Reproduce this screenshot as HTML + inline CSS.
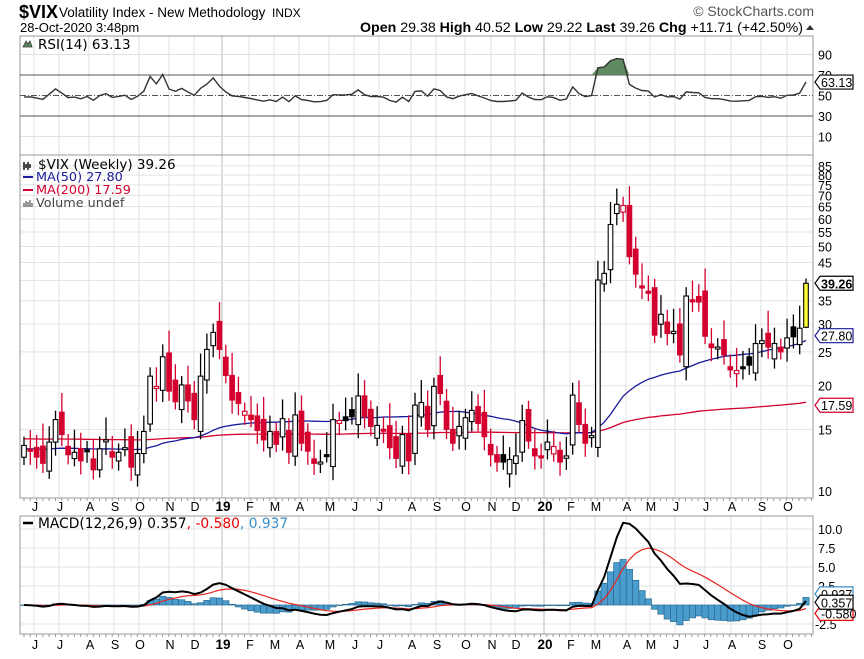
<!DOCTYPE html>
<html><head><meta charset="utf-8"><style>
body{margin:0;background:#fff;width:864px;height:654px;overflow:hidden;font-family:"Liberation Sans",Arial,sans-serif}
svg text{font-family:"Liberation Sans",Arial,sans-serif}
svg text.lg{font-family:"DejaVu Sans",Verdana,sans-serif}
</style></head><body>
<svg id="c" width="864" height="654" viewBox="0 0 864 654" xmlns="http://www.w3.org/2000/svg">
<rect width="864" height="654" fill="#fff"/>
<g id="grid"></g>
<g id="draw"></g>
<text x="19" y="18" font-size="18" font-weight="bold">$VIX</text>
<text x="59" y="17" font-size="13.5">Volatility Index - New Methodology</text>
<text x="272" y="17" font-size="12">INDX</text>
<text x="20" y="32" font-size="13">28-Oct-2020 3:48pm</text>
<text x="814" y="16" font-size="14" fill="#555" text-anchor="end">© StockCharts.com</text>
<text x="803" y="32" font-size="14.2" text-anchor="end"><tspan font-weight="bold">Open</tspan> 29.38  <tspan font-weight="bold">High</tspan> 40.52  <tspan font-weight="bold">Low</tspan> 29.22  <tspan font-weight="bold">Last</tspan> 39.26  <tspan font-weight="bold">Chg</tspan> +11.71 (+42.50%)</text>
<polygon points="806,30 814,30 810,25" fill="#333"/>
<path d="M23,47 l3,-6 l2,3 l2,-3 l2,6z" fill="#5a8a5a" stroke="#333" stroke-width="0.8"/>
<text class="lg" x="38" y="49" font-size="13.5">RSI(14) 63.13</text>
<path d="M24,162 v8 M26,164 v4 M28,162 v8 M30,164 v4" stroke="#000" stroke-width="1.4"/>
<text class="lg" x="38" y="169" font-size="13.5">$VIX (Weekly) 39.26</text>
<path d="M23,177 h10" stroke="#1a1a9c" stroke-width="2"/>
<text class="lg" x="36" y="181" font-size="12.8" fill="#1a1a9c">MA(50) 27.80</text>
<path d="M23,190 h10" stroke="#d4002e" stroke-width="2"/>
<text class="lg" x="36" y="194" font-size="12.8" fill="#d4002e">MA(200) 17.59</text>
<path d="M24,207 v-4 M26,207 v-6 M28,207 v-5 M30,207 v-7 M32,207 v-4" stroke="#555" stroke-width="1.2"/>
<text class="lg" x="36" y="207" font-size="12.8" fill="#444">Volume undef</text>
<path d="M23,523 h10" stroke="#000" stroke-width="2.5"/>
<text class="lg" x="38" y="528" font-size="13.8">MACD(12,26,9) 0.357<tspan fill="#e00">, -0.580</tspan><tspan fill="#3a8fc8">, 0.937</tspan></text>
</svg>
<script>
var S=document.getElementById('c'),G=document.getElementById('grid'),D=document.getElementById('draw');
var ns='http://www.w3.org/2000/svg';
function el(p,tag,a){var e=document.createElementNS(ns,tag);for(var k in a)e.setAttribute(k,a[k]);p.appendChild(e);return e;}
function txt(p,x,y,s,a){a=a||{};a.x=x;a.y=y;if(!a['font-size'])a['font-size']=12.5;var e=el(p,'text',a);e.textContent=s;return e;}
var L=20,R=813;
var months=[[35,'J'],[60,'J'],[90,'A'],[115,'S'],[140,'O'],[170,'N'],[195,'D'],[223,'19'],[250,'F'],[275,'M'],[300,'A'],[330,'M'],[355,'J'],[380,'J'],[412,'A'],[437,'S'],[466,'O'],[492,'N'],[516,'D'],[545,'20'],[571,'F'],[596,'M'],[627,'A'],[651,'M'],[676,'J'],[706,'J'],[732,'A'],[762,'S'],[788,'O']];
function vgrid(y0,y1){months.forEach(function(m){var yr=m[1].length>1;el(G,'line',{x1:m[0]-1,x2:m[0]-1,y1:y0,y2:y1,stroke:yr?'#b8b8b8':'#e0e0e0','stroke-width':1});});}
var rT=36,rB=155;function ry(r){return 116-(r-30)*1.025;}
vgrid(rT,rB);
[10,90].forEach(function(v){el(G,'line',{x1:L,x2:R,y1:ry(v),y2:ry(v),stroke:'#e0e0e0'});});
var mT=155,mB=498;function py(v){return 491-151.9*Math.log(v/10);}
vgrid(mT,mB);
[15,20,25,30,35,40,45,50,55,60,65,70,75,80,85].forEach(function(v){el(G,'line',{x1:L,x2:R,y1:py(v),y2:py(v),stroke:'#e3e3e3'});});
var cT=516,cB=634;function cy(v){return 605-v*7.6;}
vgrid(cT,cB);
[-2.5,2.5,5,7.5,10].forEach(function(v){el(G,'line',{x1:L,x2:R,y1:cy(v),y2:cy(v),stroke:'#e3e3e3'});});
[[rT,rB],[mT,mB],[cT,cB]].forEach(function(p){el(G,'rect',{x:L,y:p[0],width:R-L,height:p[1]-p[0],fill:'none',stroke:'#999'});});
for(var x=24;x<R;x+=6.3){el(G,'line',{x1:x,x2:x,y1:mB,y2:mB+3,stroke:'#999'});el(G,'line',{x1:x,x2:x,y1:cB,y2:cB+3,stroke:'#999'});}
months.forEach(function(m){var b=m[1].length>1;[511,649].forEach(function(y){txt(G,m[0],y,m[1],{'text-anchor':'middle','font-size':b?13.5:12.5,'font-weight':b?'bold':'normal'});});});
el(G,'line',{x1:L,x2:R,y1:ry(70),y2:ry(70),stroke:'#555'});
el(G,'line',{x1:L,x2:R,y1:ry(30),y2:ry(30),stroke:'#555'});
el(G,'line',{x1:L,x2:R,y1:ry(50),y2:ry(50),stroke:'#555','stroke-dasharray':'6,2,1,2'});
[[90,'90'],[70,'70'],[50,'50'],[30,'30'],[10,'10']].forEach(function(a){txt(G,818,ry(a[0])+5,a[1]);});
[85,80,75,70,65,60,55,50,45,35,30,25,20,15,10].forEach(function(v){txt(G,818,py(v)+5,''+v);});
[[10,'10.0'],[7.5,'7.5'],[5,'5.0'],[2.5,'2.5'],[-2.5,'-2.5']].forEach(function(a){txt(G,a[0]<0?815:818,cy(a[0])+5,a[1]);});
var C=[13.5,13.0, 12.5,12.0,13.8,16.0, 14.5,12.7,12.9,12.2, 13.0,11.5,13.2,14.0,12.5, 12.9,13.3,11.7,12.8, 14.8,21.3,19.9,24.2, 19.3,18.0,20.1,18.1, 16.0,21.3,25.4,28.4,25.4, 21.4,18.2,17.8,16.9, 16.0,14.9,14.0,14.8, 13.6,16.1,12.9,16.5,13.7, 13.0,12.0,12.1,12.7, 16.0,15.9,15.9,16.3,18.7, 16.3,15.3,15.4,15.0, 13.3,12.4,14.5,12.2, 17.6,17.9,15.0,19.9,19.0, 15.0,13.7,15.3,16.2, 17.0,15.6,14.3,12.7, 12.1,12.1,12.3,12.6, 15.9,13.9,12.6,12.5,13.8, 13.4,12.1,12.6,18.8, 15.5,13.7,14.4,40.1, 41.9,57.8,66.0,65.5, 46.8,41.7,38.2,37.2, 27.9,32.0,28.2,28.6, 24.5,36.1,35.1,34.7, 27.7,25.7,25.8,24.5, 22.2,22.1,22.5,22.9, 26.4,26.9,25.8,26.4, 25.0,27.4,27.6,29.2,39.26];
var N=C.length,sp=(806-24)/(N-1);function X(i){return 24+i*sp;}
var O=[],H=[],Lo=[];
for(var i=0;i<N;i++){var pc=i?C[i-1]:C[0];var o=pc*(1+(((i*37)%7)-3)*0.025);if(i==N-1)o=29.38;O.push(o);
var h=Math.max(o,C[i])*(1.06+((i*13)%5)*0.025),l=Math.min(o,C[i])*(0.95-((i*11)%4)*0.012);if(i==N-1){h=40.52;l=29.22;}H.push(h);Lo.push(l);}
function ma(n,pad){var a=[],arr=[];for(var k=0;k<n;k++)arr.push(pad);arr=arr.concat(C);for(var i=0;i<N;i++){var s=0;for(var k=0;k<n;k++)s+=arr[i+n-k];a.push(s/n);}return a;}
var m50=ma(50,13.2),m200=ma(200,14.1);
function poly(arr,f,col,w){var p=arr.map(function(v,i){return X(i).toFixed(1)+','+f(v).toFixed(1);}).join(' ');el(D,'polyline',{points:p,fill:'none',stroke:col,'stroke-width':w||1.2});}
poly(m200,py,'#d4002e',1.3);poly(m50,py,'#1a1a9c',1.3);
for(var i=0;i<N;i++){var x=X(i),up=i==0||C[i]>=C[i-1],col=up?'#000':'#d4002e',hol=C[i]>=O[i];
el(D,'line',{x1:x,x2:x,y1:py(H[i]),y2:py(Lo[i]),stroke:col,'stroke-width':1.3});
var y1=py(Math.max(O[i],C[i])),y2=py(Math.min(O[i],C[i]));if(y2-y1<2)y2=y1+2;
el(D,'rect',{x:x-2.3,y:y1,width:4.6,height:y2-y1,fill:i==N-1?'#ffff33':(hol?'#fff':col),stroke:col,'stroke-width':1.1});}
var rs=[],ag=0.6,al=0.6;for(var i=0;i<N;i++){if(i==0){rs.push(48);continue;}var d=C[i]-C[i-1],g=Math.max(d,0),lo=Math.max(-d,0);ag=(ag*13+g)/14;al=(al*13+lo)/14;rs.push(100-100/(1+ag/al));}
rs=rs.map(function(r){return r>65?r:50+(r-50)*0.8;});
rs[N-1]=63.13;
var fp='';for(var i=0;i<N;i++){fp+=X(i).toFixed(1)+','+Math.min(ry(rs[i]),ry(70)).toFixed(1)+' ';}
el(D,'polygon',{points:X(0)+','+ry(70)+' '+fp+X(N-1)+','+ry(70),fill:'#5f8a5f'});
poly(rs,ry,'#333',1.4);
function ema(a,n){var k=2/(n+1),r=[a[0]];for(var i=1;i<a.length;i++)r.push(a[i]*k+r[i-1]*(1-k));return r;}
var e12=ema(C,12),e26=ema(C,26),mc=e12.map(function(v,i){return v-e26[i];}),sg=ema(mc,9);
for(var i=0;i<N;i++){var h=mc[i]-sg[i],y0=cy(0),y1=cy(h);el(D,'rect',{x:X(i)-3.15,y:Math.min(y0,y1),width:6.3,height:Math.max(Math.abs(y1-y0),0.5),fill:'#4a9ccc',stroke:'#2a6a94','stroke-width':0.7});}
poly(sg,cy,'#e8241f',1.2);poly(mc,cy,'#000',2);
function tag(y,s,col,bold,fill){el(D,'path',{d:'M815,'+y+' l5,-7 h33 v14 h-33z',fill:fill||'#fff',stroke:col,'stroke-width':1.2});txt(D,821,y+5,s,{'font-size':12.5,'font-weight':bold?'bold':'normal'});}
tag(py(17.59),'17.59','#d4002e');
tag(py(27.8),'27.80','#1a1a9c');
tag(py(39.26),'39.26','#000',true);
tag(ry(63.13),'63.13','#000');
tag(cy(0.937)-4,'0.937','#3a8fc8');
tag(cy(-0.58)+4,'-0.580','#e00');
tag(cy(0.357),'0.357','#000');
</script>
</body></html>
